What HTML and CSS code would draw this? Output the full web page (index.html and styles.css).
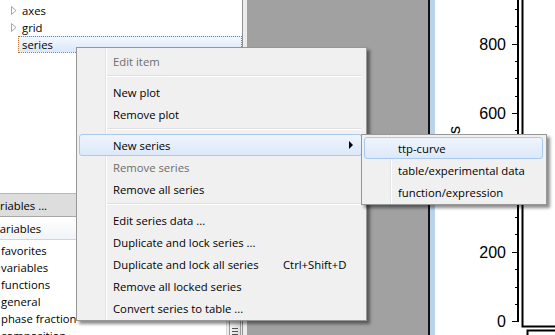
FILE: index.html
```html
<!DOCTYPE html>
<html lang="en">
<head>
    <meta charset="UTF-8">
    <title>Plot series menu</title>
    <link rel="stylesheet" href="styles.css">
</head>
<body>
    <div class="app">
        <div class="left">
            <div class="tree">
                <div class="node"><span class="twisty"><svg width="6" height="9" viewBox="0 0 6 9"><path d="M0.5 0.5 L5 4.5 L0.5 8.5 Z" fill="#fff" stroke="#a6a6a6"/></svg></span>axes</div>
                <div class="node"><span class="twisty"><svg width="6" height="9" viewBox="0 0 6 9"><path d="M0.5 0.5 L5 4.5 L0.5 8.5 Z" fill="#fff" stroke="#a6a6a6"/></svg></span>grid</div>
                <div class="node selected">series</div>
            </div>
            <div class="dock-title"><span>Variables ...</span></div>
            <div class="list-head"><span>Variables</span></div>
            <div class="list-body">
                <div class="rows">
                    <div class="row">favorites</div>
                    <div class="row">variables</div>
                    <div class="row">functions</div>
                    <div class="row">general</div>
                    <div class="row">phase fraction</div>
                    <div class="row">composition</div>
                </div>
                <div class="vscroll">
                    <div class="thumb"><span></span><span></span><span></span></div>
                </div>
            </div>
        </div>
        <div class="splitter"></div>
        <div class="workspace"></div>
        <div class="plot">
            <svg class="chart" width="120" height="335" viewBox="0 0 120 335">
                <text class="axis-title" transform="translate(25 126) rotate(-90)" text-anchor="end">s</text>
                <g stroke="#000" stroke-width="1">
                    <line x1="77" y1="44.5" x2="83" y2="44.5"/>
                    <line x1="77" y1="113.5" x2="83" y2="113.5"/>
                    <line x1="77" y1="183.5" x2="83" y2="183.5"/>
                    <line x1="77" y1="252.5" x2="83" y2="252.5"/>
                    <line x1="77" y1="321.5" x2="83" y2="321.5"/>
                    <line x1="80" y1="9.5" x2="83" y2="9.5"/>
                    <line x1="80" y1="26.5" x2="83" y2="26.5"/>
                    <line x1="80" y1="61.5" x2="83" y2="61.5"/>
                    <line x1="80" y1="78.5" x2="83" y2="78.5"/>
                    <line x1="80" y1="96.5" x2="83" y2="96.5"/>
                    <line x1="80" y1="130.5" x2="83" y2="130.5"/>
                    <line x1="80" y1="148.5" x2="83" y2="148.5"/>
                    <line x1="80" y1="165.5" x2="83" y2="165.5"/>
                    <line x1="80" y1="200.5" x2="83" y2="200.5"/>
                    <line x1="80" y1="217.5" x2="83" y2="217.5"/>
                    <line x1="80" y1="234.5" x2="83" y2="234.5"/>
                    <line x1="80" y1="269.5" x2="83" y2="269.5"/>
                    <line x1="80" y1="287.5" x2="83" y2="287.5"/>
                    <line x1="80" y1="304.5" x2="83" y2="304.5"/>
                </g>
                <g fill="none" stroke="#000" stroke-width="2">
                    <path d="M83 0 V322"/>
                    <path d="M87.5 0 V326.5 H120"/>
                    <path d="M92.5 336 V330.5 H120"/>
                </g>
                <g class="tick-labels" text-anchor="end">
                    <text x="71" y="50">800</text>
                    <text x="71" y="119">600</text>
                    <text x="71" y="258">200</text>
                    <text x="71" y="327">0</text>
                </g>
            </svg>
        </div>
    </div>

    <div class="menu main-menu">
        <div class="item disabled">Edit item</div>
        <div class="sep"></div>
        <div class="item">New plot</div>
        <div class="item">Remove plot</div>
        <div class="sep"></div>
        <div class="item active">New series<span class="arrow"></span></div>
        <div class="item disabled">Remove series</div>
        <div class="item">Remove all series</div>
        <div class="sep"></div>
        <div class="item">Edit series data ...</div>
        <div class="item">Duplicate and lock series ...</div>
        <div class="item"><span class="label">Duplicate and lock all series</span><span class="shortcut">Ctrl+Shift+D</span></div>
        <div class="item">Remove all locked series</div>
        <div class="item">Convert series to table ...</div>
    </div>

    <div class="menu sub-menu">
        <div class="item active">ttp-curve</div>
        <div class="item">table/experimental data</div>
        <div class="item">function/expression</div>
    </div>
</body>
</html>
```

FILE: styles.css
```css
body {
    margin: 0;
    width: 555px;
    height: 335px;
    overflow: hidden;
    font-family: 'Open Sans', 'Noto Sans', sans-serif;
    font-size: 11.3px;
    color: #000;
    background-color: #f0f0f0;
}
.app {
    display: flex;
    height: 335px;
}

/* left dock */
.left {
    width: 242px;
    border-right: 1px solid #8e9091;
    background-color: #fff;
    display: flex;
    flex-direction: column;
}
.tree {
    height: 193px;
    padding-top: 2px;
    box-sizing: border-box;
}
.node {
    display: flex;
    align-items: center;
    height: 17px;
    white-space: nowrap;
}
.twisty {
    width: 22px;
    display: flex;
    align-items: center;
}
.twisty svg {
    margin-left: 11px;
}
.node.selected {
    height: 15px;
    margin-left: 18px;
    padding-left: 3px;
    border: 1px dotted #b8773a;
    background: linear-gradient(#f3f8fe, #d8e7fb);
}
.dock-title {
    height: 22px;
    border-top: 1px solid #b9b9b9;
    border-bottom: 1px solid #a8a8a8;
    background-color: #dddddd;
    display: flex;
    align-items: center;
    white-space: nowrap;
    overflow: hidden;
}
.dock-title span {
    margin-left: -13px;
}
.list-head {
    height: 22px;
    border-bottom: 1px solid #d5d5d5;
    background: linear-gradient(#ffffff, #f1f4f8);
    display: flex;
    align-items: center;
    white-space: nowrap;
    overflow: hidden;
}
.list-head span {
    margin-left: -7px;
}
.list-body {
    flex: 1;
    display: flex;
    overflow: hidden;
}
.rows {
    flex: 1;
    padding-top: 2px;
}
.row {
    height: 17px;
    line-height: 17px;
    padding-left: 1px;
    white-space: nowrap;
}
.vscroll {
    width: 16px;
    background-color: #ececec;
    border-left: 1px solid #d9d9d9;
    box-sizing: border-box;
    padding-top: 60px;
}
.thumb {
    height: 60px;
    margin: 0 1px 0 2px;
    border: 1px solid #989898;
    border-radius: 2px;
    background: linear-gradient(to right, #f2f2f2, #dcdcdc);
    display: flex;
    flex-direction: column;
    align-items: center;
    justify-content: center;
    gap: 2px;
}
.thumb span {
    width: 6px;
    height: 1px;
    background-color: #555;
}
.splitter {
    width: 4px;
    background-color: #ececec;
}
.workspace {
    width: 181px;
    background-color: #a1a1a1;
}

/* plot */
.plot {
    flex: 1;
    border-left: 2px solid #111;
    background-color: #fff;
    box-shadow: inset 5px 0 0 #bad2ea;
    padding-left: 5px;
}
.chart {
    display: block;
}
.tick-labels text {
    font-family: 'Liberation Sans', Arial, sans-serif;
    font-size: 16px;
    fill: #000;
}
.axis-title {
    font-family: 'Liberation Sans', Arial, sans-serif;
    font-size: 16px;
}

/* context menus */
.menu {
    position: absolute;
    box-sizing: border-box;
    background-color: #f0f0f0;
    border: 1px solid #979797;
    box-shadow: 3px 3px 3px rgba(0, 0, 0, 0.45);
}
.menu::before {
    content: '';
    position: absolute;
    top: 0;
    bottom: 0;
    left: 28px;
    width: 1px;
    background-color: #e2e3e3;
    border-right: 1px solid #fff;
}
.main-menu {
    left: 76px;
    top: 47px;
    width: 291px;
    padding: 2px 4px 1px 2px;
}
.sub-menu {
    left: 361px;
    top: 134px;
    width: 186px;
    padding: 2px 3px 1px 2px;
}
.item {
    position: relative;
    height: 22px;
    box-sizing: border-box;
    padding-left: 33px;
    display: flex;
    align-items: center;
    white-space: nowrap;
    border: 1px solid transparent;
    border-radius: 3px;
}
.item.disabled {
    color: #6d6d6d;
}
.item.active {
    border-color: #aac9ee;
    background: linear-gradient(#eef4fc, #dde9f9);
}
.item .label {
    width: 170px;
}
.arrow {
    margin-left: auto;
    margin-right: 8px;
    width: 0;
    height: 0;
    border-top: 4px solid transparent;
    border-bottom: 4px solid transparent;
    border-left: 4px solid #000;
}
.sep {
    position: relative;
    height: 9px;
    margin-left: 28px;
}
.sep::after {
    content: '';
    position: absolute;
    left: 0;
    right: 0;
    top: 3px;
    height: 1px;
    background-color: #e0e0e0;
    border-bottom: 1px solid #fff;
}
```
